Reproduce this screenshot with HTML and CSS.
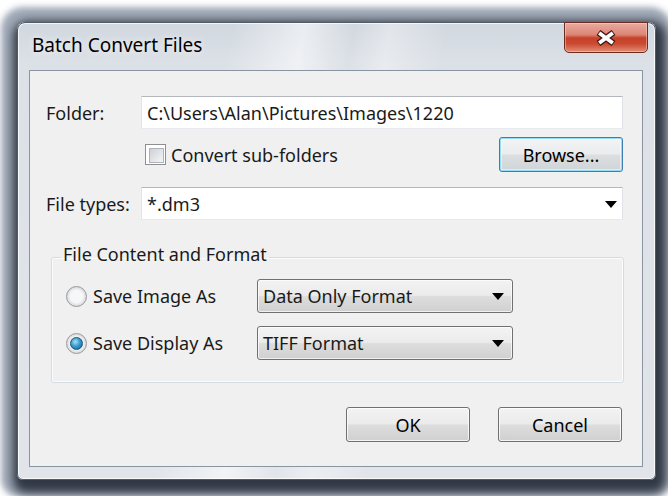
FILE: index.html
```html
<!DOCTYPE html>
<html lang="en">
<head>
<meta charset="utf-8">
<title>Batch Convert Files</title>
<link rel="stylesheet" href="styles.css">
</head>
<body>
<div class="window">
  <div class="titlebar">
    <span class="title">Batch Convert Files</span>
    <button class="close" type="button" aria-label="Close">
      <svg width="24" height="16" viewBox="0 0 24 16" aria-hidden="true">
        <path d="M4.5 2.5 L19.5 13.5 M19.5 2.5 L4.5 13.5" stroke="#3d1812" stroke-width="6.4" fill="none"/>
        <path d="M5.2 3 L18.8 13 M18.8 3 L5.2 13" stroke="#fff" stroke-width="3.8" fill="none"/>
      </svg>
    </button>
  </div>

  <div class="client">
    <div class="row">
      <span class="lbl">Folder:</span>
      <div class="field">C:\Users\Alan\Pictures\Images\1220</div>
    </div>

    <div class="row row-options">
      <span></span>
      <label class="check"><span class="box"></span>Convert sub-folders</label>
      <button class="btn btn-default" type="button">Browse...</button>
    </div>

    <div class="row row-types">
      <span class="lbl">File types:</span>
      <div class="field combo">*.dm3<span class="arrow"></span></div>
    </div>

    <fieldset class="group">
      <legend>File Content and Format</legend>
      <div class="opt">
        <span class="radio"></span>
        <span class="opt-label">Save Image As</span>
        <div class="select">Data Only Format<span class="arrow"></span></div>
      </div>
      <div class="opt">
        <span class="radio on"></span>
        <span class="opt-label">Save Display As</span>
        <div class="select">TIFF Format<span class="arrow"></span></div>
      </div>
    </fieldset>

    <div class="actions">
      <button class="btn" type="button">OK</button>
      <button class="btn" type="button">Cancel</button>
    </div>
  </div>
</div>
</body>
</html>
```

FILE: styles.css
```css
* { box-sizing: border-box; }

html { height: 100%; }

body {
  margin: 0;
  min-height: 100vh;
  background: #fff;
  font: 18px/22px "Noto Sans", "Open Sans", sans-serif;
  color: #1a1a1a;
  overflow: hidden;
}

/* ---------- window frame ---------- */
.window {
  margin: 22px 0 0 17px;
  width: 639px;
  height: 458px;
  display: flex;
  flex-direction: column;
  padding-bottom: 12px;
  border: 1px solid #525b68;
  border-radius: 8px 8px 6px 6px;
  background:
    linear-gradient(100deg, rgba(255,255,255,0) 30%, rgba(255,255,255,.55) 40%, rgba(255,255,255,0) 47%, rgba(255,255,255,.35) 52%, rgba(255,255,255,0) 60%),
    linear-gradient(#d1d7df, #dce1e7 40px, #e1e5ea);
  box-shadow:
    inset 0 0 0 1px rgba(255,255,255,.75),
    3px 6px 10px 7px rgba(38,44,56,.9),
    0 1px 6px 16px rgba(156,165,180,.95);
}

.titlebar {
  height: 47px;
  display: flex;
  align-items: flex-start;
  justify-content: space-between;
  padding-left: 14px;
}

.title {
  margin-top: 10px;
  font-size: 19px;
  line-height: 24px;
  color: #000;
  text-shadow: 0 0 6px rgba(255,255,255,.9);
}

.close {
  margin: -1px 7px 0 0;
  width: 84px;
  height: 31px;
  padding: 0;
  display: flex;
  align-items: center;
  justify-content: center;
  border: 1px solid #6e2b21;
  border-radius: 0 0 5px 5px;
  background: linear-gradient(#e8ab9f 0%, #dc8676 40%, #c6402a 52%, #cb4a32 72%, #e28f75 100%);
  box-shadow: inset 0 0 0 1px rgba(255,220,210,.45);
}

/* ---------- client area ---------- */
.client {
  flex: 1;
  margin: 0 12px 0 11px;
  border: 1px solid #8b95a2;
  background: #f0f0f0;
  padding: 25px 19px 0 16px;
}

.row {
  display: grid;
  grid-template-columns: 95px 1fr;
  align-items: center;
}

.row-options {
  grid-template-columns: 95px 1fr 124px;
  height: 35px;
  margin-top: 8px;
}

.row-types { margin-top: 15px; }

.lbl { white-space: nowrap; }

.field {
  position: relative;
  height: 33px;
  display: flex;
  align-items: center;
  padding: 0 5px;
  background: #fff;
  border: 1px solid;
  border-color: #b4b7bd #dfe3e8 #e6eaee #e1e4ea;
}

.combo .arrow { right: 5px; }

.arrow {
  position: absolute;
  top: 50%;
  margin-top: -3px;
  width: 0;
  height: 0;
  border-left: 6px solid transparent;
  border-right: 6px solid transparent;
  border-top: 7px solid #000;
}

/* checkbox */
.check {
  display: flex;
  align-items: center;
  gap: 5px;
  margin-left: 4px;
}

.box {
  width: 21px;
  height: 21px;
  border: 1px solid #8f8f8f;
  background: #fff;
  padding: 3px;
}

.box::after {
  content: "";
  display: block;
  width: 100%;
  height: 100%;
  border: 1px solid #aeb3b9;
  background: linear-gradient(135deg, #cdd1d6, #f5f5f5);
}

/* push buttons */
.btn {
  height: 35px;
  width: 124px;
  padding: 0;
  font: inherit;
  color: #000;
  border: 1px solid #707070;
  border-radius: 3px;
  background: linear-gradient(#f3f3f3 0%, #ebebeb 48%, #dddddd 52%, #d0d0d0 100%);
  box-shadow: inset 0 0 0 1px rgba(255,255,255,.75);
}

.btn-default {
  border-color: #3c7fb1;
  box-shadow: inset 0 0 0 1px #93dcf3, inset 0 0 0 2px rgba(255,255,255,.5);
  background: linear-gradient(#f2f4f5 0%, #eaeced 48%, #dcdfe1 52%, #d1d4d6 100%);
}

/* group box */
.group {
  margin: 23px -1px 0 5px;
  padding: 8px 10px 22px 14px;
  border: 1px solid #d5dde2;
  border-radius: 3px;
  box-shadow: inset 0 0 0 1px rgba(255,255,255,.8);
  min-width: 0;
}

.group legend {
  padding: 0 2px 6px;
  margin-left: -5px;
  line-height: 22px;
}

.opt {
  display: grid;
  grid-template-columns: 27px 164px 256px;
  align-items: center;
  height: 34px;
}

.opt + .opt { margin-top: 13px; }

.radio {
  width: 21px;
  height: 21px;
  border-radius: 50%;
  border: 1px solid #979a9e;
  background: radial-gradient(circle at 50% 50%, #f7f7f7 0 45%, #d4d6d9 75%, #e9eaeb 100%);
  display: flex;
  align-items: center;
  justify-content: center;
}

.radio.on::after {
  content: "";
  width: 11px;
  height: 11px;
  border-radius: 50%;
  border: 1px solid #1b5276;
  background: radial-gradient(circle at 40% 35%, #a9e0f8 0, #3b9ccf 45%, #135c8c 100%);
}

.select {
  position: relative;
  height: 34px;
  display: flex;
  align-items: center;
  padding: 0 5px;
  border: 1px solid #707070;
  border-radius: 3px;
  background: linear-gradient(#f3f3f3 0%, #ebebeb 48%, #dddddd 52%, #d0d0d0 100%);
  box-shadow: inset 0 0 0 1px rgba(255,255,255,.7);
}

.select .arrow { right: 8px; }

/* dialog buttons */
.actions {
  display: flex;
  justify-content: flex-end;
  gap: 28px;
  margin-top: 24px;
  padding-right: 1px;
}
```
